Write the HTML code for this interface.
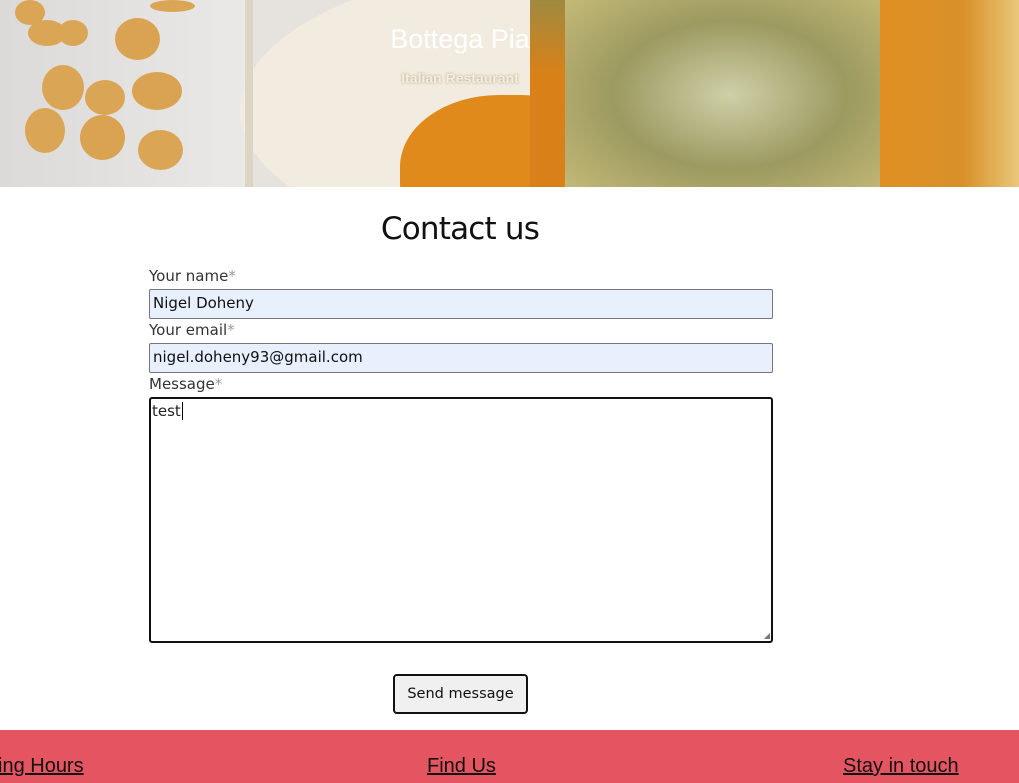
<!DOCTYPE html>
<html><head><meta charset="utf-8">
<style>
*{box-sizing:border-box;margin:0;padding:0}
body{width:1019px;height:783px;overflow:hidden;background:#fff;font-family:"DejaVu Sans","Liberation Sans",sans-serif;color:#222;position:relative}
.hero{position:absolute;left:0;top:0;width:1019px;height:187px;overflow:hidden;background:#e6e3df}
.hero div{position:absolute}
.t1{position:absolute;z-index:5;left:0;width:920px;text-align:center;top:24px;font-size:27px;color:#fff;font-family:"Liberation Sans",sans-serif}
.t2{position:absolute;z-index:5;left:0;width:920px;text-align:center;top:70px;font-size:14px;font-weight:bold;color:#f4eedc;font-family:"Liberation Sans",sans-serif;text-shadow:0 0 2px rgba(120,90,40,.5)}
h1{position:absolute;top:211px;left:0;width:920px;text-align:center;font-weight:normal;font-size:31px;color:#111;font-family:"DejaVu Sans",sans-serif;letter-spacing:-0.8px}
label{position:absolute;left:149px;font-size:15px;color:#333}
label span{color:#999}
.in{position:absolute;left:149px;width:624px;height:30px;background:#e8f0fe;border:1px solid #767676;border-radius:2px;font-size:15px;padding:4px 3px;color:#111}
.ta{position:absolute;left:149px;top:397px;width:624px;height:246px;border:2px solid #111;border-radius:3px;padding:3px 1px;font-size:15px}
.btn{position:absolute;left:393px;top:674px;width:135px;height:40px;border:2px solid #111;border-radius:4px;background:#f0f0f0;font-size:14.5px;text-align:center;line-height:36px;color:#111}
.foot{position:absolute;left:0;top:730px;width:1019px;height:53px;background:#e55561}
.foot a{position:absolute;top:25px;font-size:20px;color:#111;text-decoration:underline;font-family:"Liberation Sans",sans-serif}
</style></head><body>
<div class="hero">
 <div style="left:0;top:0;width:250px;height:187px;background:linear-gradient(90deg,#dcdad8,#ebe9e7)"></div>
 <div style="left:240px;top:-40px;width:700px;height:300px;border-radius:50%;background:#f1ebe0"></div>
 <div style="left:245px;top:0;width:8px;height:187px;background:#ddd5c3"></div>
 <div style="left:400px;top:95px;width:220px;height:160px;border-radius:45%;background:#e08a1c"></div>
 <div style="left:530px;top:0;width:60px;height:187px;background:linear-gradient(180deg,#a08a40,#d98118 40%)"></div>
 <div style="left:565px;top:-10px;width:330px;height:210px;border-radius:10px;background:radial-gradient(ellipse at 50% 50%,#cfcfa8,#9c9a60 50%,#c9bd7a)"></div>
 <div style="left:880px;top:0;width:139px;height:187px;background:linear-gradient(90deg,#e09022,#d9902a 60%,#e9c77a)"></div>
 <div style="left:15px;top:0;width:30px;height:25px;border-radius:50%;background:#dba556"></div>
 <div style="left:28px;top:20px;width:38px;height:26px;border-radius:50%;background:#dba556"></div>
 <div style="left:58px;top:20px;width:30px;height:26px;border-radius:50%;background:#dba556"></div>
 <div style="left:115px;top:18px;width:45px;height:42px;border-radius:50%;background:#d9a352"></div>
 <div style="left:42px;top:65px;width:42px;height:45px;border-radius:50%;background:#dba556"></div>
 <div style="left:85px;top:80px;width:40px;height:35px;border-radius:50%;background:#dba556"></div>
 <div style="left:132px;top:72px;width:50px;height:38px;border-radius:50%;background:#d9a352"></div>
 <div style="left:25px;top:108px;width:40px;height:45px;border-radius:50%;background:#dba556"></div>
 <div style="left:80px;top:115px;width:45px;height:45px;border-radius:50%;background:#d9a352"></div>
 <div style="left:138px;top:130px;width:45px;height:40px;border-radius:50%;background:#dba556"></div>
 <div style="left:150px;top:0;width:45px;height:12px;border-radius:50%;background:#dba556"></div>
</div>
<div class="t1">Bottega Pia</div>
<div class="t2">Italian Restaurant</div>
<h1>Contact us</h1>
<label style="top:267px">Your name<span>*</span></label>
<div class="in" style="top:289px">Nigel Doheny</div>
<label style="top:321px">Your email<span>*</span></label>
<div class="in" style="top:343px">nigel.doheny93@gmail.com</div>
<label style="top:375px">Message<span>*</span></label>
<div class="ta">test<span style="border-left:1px solid #000;margin-left:1px"></span><span style="position:absolute;right:1px;bottom:1px;font-size:8px;color:#777">◢</span></div>
<div class="btn">Send message</div>
<div class="foot">
 <a style="left:-2px">ing Hours</a>
 <a style="left:427px">Find Us</a>
 <a style="left:843px">Stay in touch</a>
</div>
</body></html>
